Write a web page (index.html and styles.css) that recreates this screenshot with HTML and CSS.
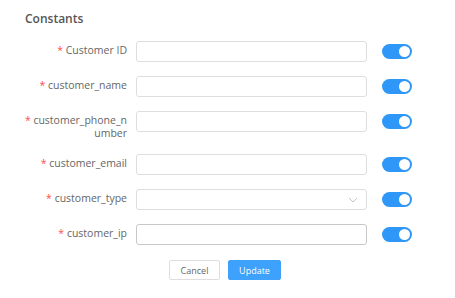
FILE: index.html
```html
<!DOCTYPE html>
<html lang="en">
<head>
  <meta charset="UTF-8" />
  <meta name="viewport" content="width=device-width, initial-scale=1.0"/>
  <title>Constants</title>
  <link rel="stylesheet" href="styles.css">
</head>
<body>

  <div class="panel">
    <h2>Constants</h2>

    <form class="form">
      <div class="row">
        <label class="label"><span class="req">*</span> Customer ID</label>
        <input class="field" type="text" />
        <span class="switch"><span class="knob"></span></span>
      </div>
      <div class="row">
        <label class="label"><span class="req">*</span> customer_name</label>
        <input class="field" type="text" />
        <span class="switch"><span class="knob"></span></span>
      </div>
      <div class="row">
        <label class="label"><span class="req">*</span> customer_phone_number</label>
        <input class="field" type="text" />
        <span class="switch"><span class="knob"></span></span>
      </div>
      <div class="row">
        <label class="label"><span class="req">*</span> customer_email</label>
        <input class="field" type="text" />
        <span class="switch"><span class="knob"></span></span>
      </div>
      <div class="row">
        <label class="label"><span class="req">*</span> customer_type</label>
        <div class="field select">
          <svg width="10" height="6" viewBox="0 0 10 6"><path d="M1 1l4 4 4-4" fill="none" stroke="#c4c4c4" stroke-width="1"/></svg>
        </div>
        <span class="switch"><span class="knob"></span></span>
      </div>
      <div class="row">
        <label class="label"><span class="req">*</span> customer_ip</label>
        <input class="field dark" type="text" />
        <span class="switch"><span class="knob"></span></span>
      </div>

      <div class="actions">
        <button type="button" class="btn">Cancel</button>
        <button type="button" class="btn primary">Update</button>
      </div>
    </form>
  </div>

</body>
</html>
```

FILE: styles.css
```css
body {
  margin: 0;
  font-family: 'Open Sans', sans-serif;
  background-color: #fff;
  color: #555;
}

.panel {
  padding: 10px 0 0 25px;
}

h2 {
  font-size: 12px;
  font-weight: 600;
  line-height: 17px;
  margin: 0 0 14px;
  color: #555;
}

.form {
  margin-left: -4px;
}

.row {
  display: flex;
  align-items: flex-start;
  margin-bottom: 14px;
}

.label {
  width: 106px;
  box-sizing: border-box;
  padding: 3px 0 0;
  font-size: 10.5px;
  line-height: 13px;
  text-align: right;
  line-break: anywhere;
  color: #666;
}

.req {
  color: #ff4d4f;
}

.field {
  width: 231px;
  height: 21px;
  margin: 0 0 0 9px;
  padding: 0 8px;
  box-sizing: border-box;
  border: 1px solid #dedede;
  border-radius: 3px;
  background: #fff;
  outline: none;
}

.field.dark {
  border-color: #c8c8c8;
}

.select {
  display: flex;
  align-items: center;
  justify-content: flex-end;
}

.switch {
  position: relative;
  width: 30px;
  height: 15px;
  margin: 3px 0 0 15px;
  border-radius: 8px;
  background-color: #2f97f7;
}

.knob {
  position: absolute;
  top: 2px;
  right: 2px;
  width: 11px;
  height: 11px;
  border-radius: 50%;
  background: #fff;
}

.actions {
  display: flex;
  gap: 8px;
  padding: 1px 0 0 148px;
}

.btn {
  height: 20px;
  padding: 0;
  width: 51px;
  font-family: 'Open Sans', sans-serif;
  font-size: 9px;
  color: #666;
  background: #fff;
  border: 1px solid #dedede;
  border-radius: 2px;
  cursor: pointer;
}

.btn.primary {
  width: 53px;
  color: #fff;
  background-color: #3ea1fb;
  border-color: #3ea1fb;
}
```
